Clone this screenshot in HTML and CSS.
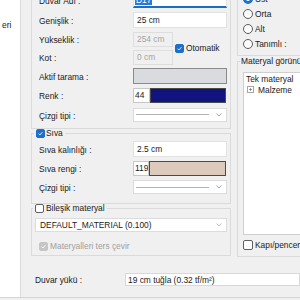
FILE: index.html
```html
<!DOCTYPE html>
<html lang="tr">
<head>
<meta charset="utf-8">
<link rel="stylesheet" href="styles.css">
</head>
<body>
<div class="frame">
  <aside class="sidebar"><span class="side-item">eri</span></aside>
  <main class="dialog">
    <div class="columns">
      <div class="col-left">
        <fieldset class="group g-main">
          <div class="form form-main">
            <span class="lbl">Duvar Adı :</span>
            <div class="field focus span2 h16"><span class="sel">D17</span></div>

            <span class="lbl">Genişlik :</span>
            <div class="field span2 h16">25 cm</div>

            <span class="lbl">Yükseklik :</span>
            <div class="field disabled h15 narrow">254 cm</div>
            <div class="auto-check">
              <span class="cb checked"><svg viewBox="0 0 10 10"><path d="M2.3 5.2 L4.2 7.1 L7.8 3.1" fill="none" stroke="#fff" stroke-width="1.2"/></svg></span>
              <span>Otomatik</span>
            </div>

            <span class="lbl">Kot :</span>
            <div class="field disabled h15 narrow">0 cm</div>

            <span class="lbl">Aktif tarama :</span>
            <div class="swatch-gray span2"></div>

            <span class="lbl">Renk :</span>
            <div class="color span2"><span class="num">44</span><span class="sw sw-navy"></span></div>

            <span class="lbl">Çizgi tipi :</span>
            <div class="combo span2 h14"><span class="line"></span><svg class="chev" viewBox="0 0 6 4"><path d="M0.5 0.5 L3 3 L5.5 0.5" fill="none" stroke="#8a8a8a" stroke-width="0.8"/></svg></div>
          </div>
        </fieldset>

        <fieldset class="group g-siva">
          <legend class="legend-cb lg-siva">
            <span class="cb checked"><svg viewBox="0 0 10 10"><path d="M2.3 5.2 L4.2 7.1 L7.8 3.1" fill="none" stroke="#fff" stroke-width="1.2"/></svg></span>
            <span>Sıva</span>
          </legend>
          <div class="form form-siva">
            <span class="lbl">Sıva kalınlığı :</span>
            <div class="field span2 h16">2.5 cm</div>

            <span class="lbl">Sıva rengi :</span>
            <div class="color span2"><span class="num num-clip">119</span><span class="sw sw-beige"></span></div>

            <span class="lbl">Çizgi tipi :</span>
            <div class="combo span2 h14"><span class="line"></span><svg class="chev" viewBox="0 0 6 4"><path d="M0.5 0.5 L3 3 L5.5 0.5" fill="none" stroke="#8a8a8a" stroke-width="0.8"/></svg></div>
          </div>
        </fieldset>

        <fieldset class="group g-bilesik">
          <legend class="legend-cb lg-bilesik">
            <span class="cb"></span>
            <span>Bileşik materyal</span>
          </legend>
          <div class="combo combo-text h14"><span class="ctext">DEFAULT_MATERIAL (0.100)</span><svg class="chev" viewBox="0 0 6 4"><path d="M0.5 0.5 L3 3 L5.5 0.5" fill="none" stroke="#b0b0b0" stroke-width="0.8"/></svg></div>
          <div class="check-row disabled-row">
            <span class="cb cb-disabled"><svg viewBox="0 0 10 10"><path d="M2.3 5.2 L4.2 7.1 L7.8 3.1" fill="none" stroke="#fff" stroke-width="1.2"/></svg></span>
            <span>Materyalleri ters çevir</span>
          </div>
        </fieldset>
      </div>

      <div class="col-right">
        <fieldset class="group g-radio">
          <div class="radio-row"><span class="rb checked"></span><span>Üst</span></div>
          <div class="radio-row"><span class="rb"></span><span>Orta</span></div>
          <div class="radio-row"><span class="rb"></span><span>Alt</span></div>
          <div class="radio-row"><span class="rb"></span><span>Tanımlı :</span></div>
        </fieldset>

        <fieldset class="group g-mat">
          <legend class="lg-mat">Materyal görünüşü</legend>
          <div class="listbox">
            <div class="li li-head">Tek materyal</div>
            <div class="li li-node"><span class="expander"><svg viewBox="0 0 7 7"><path d="M1.5 3.5 H5.5 M3.5 1.5 V5.5" stroke="#555" stroke-width="0.8"/></svg></span><span>Malzeme</span></div>
          </div>
          <div class="check-row kapi-row">
            <span class="cb"></span>
            <span>Kapı/pencere</span>
          </div>
        </fieldset>
      </div>
    </div>

    <div class="load-row">
      <span class="load-lbl">Duvar yükü :</span>
      <div class="load-field">19 cm tuğla (0.32 tf/m²)</div>
    </div>
  </main>
</div>
</body>
</html>
```

FILE: styles.css
```css
* { box-sizing: border-box; }

html, body { margin: 0; padding: 0; }

body {
  width: 300px;
  height: 300px;
  overflow: hidden;
  background: #f0f0f0;
  font-family: "Liberation Sans", Arial, sans-serif;
  font-size: 8.4px;
  line-height: 10px;
  color: #1a1a1a;
}

.frame {
  display: flex;
  height: 298px;
  border-bottom: 1px solid #d4d4d4;
  overflow: hidden;
}

.sidebar {
  width: 21px;
  flex: none;
  background: #fff;
  border-right: 1px solid #dcdcdc;
  padding: 20px 0 0 2px;
  white-space: nowrap;
  overflow: hidden;
}

.dialog {
  flex: 1;
  min-width: 0;
  display: flex;
  flex-direction: column;
  margin-top: -20px;
}

.columns {
  display: flex;
  gap: 6px;
  padding-left: 10px;
  align-items: flex-start;
}

.col-left {
  width: 200px;
  flex: none;
  display: flex;
  flex-direction: column;
}

.col-right {
  width: 90px;
  flex: none;
  display: flex;
  flex-direction: column;
}

fieldset.group {
  margin: 0;
  border: 1px solid #dadada;
  min-width: 0;
}

/* main group */
.g-main { padding: 9px 3px 4px 7px; }

.form {
  display: grid;
  grid-template-columns: 94px 42px 52px;
  align-items: center;
}

.form-main { grid-template-rows: 20px 20px 18px 18px 19px 20px 19px; }
.form-siva { grid-template-rows: 19px 19px 19px; }

.lbl { white-space: nowrap; padding-top: 2px; }

.span2 { grid-column: 2 / span 2; }

.h16 { height: 16px; }
.h15 { height: 15px; }
.h14 { height: 14px; }

.field {
  background: #fff;
  border: 1px solid #e2e2e2;
  padding: 0 3px;
  display: flex;
  align-items: center;
  white-space: nowrap;
  overflow: hidden;
}

.field.focus { border-bottom: 2px solid #1a6fc4; padding-left: 1px; }

.sel {
  background: #2b78d4;
  color: #fff;
  padding: 0 1px;
}

.field.disabled {
  background: #f0f0f0;
  border-color: #dedede;
  color: #a3a3a3;
}

.narrow { width: 40px; }

.auto-check {
  grid-column: 3;
  grid-row: 3 / span 2;
  display: flex;
  align-items: center;
  gap: 2px;
}

.swatch-gray {
  height: 16px;
  border: 1px solid #8a8a8a;
  background: #d9dbde;
}

.color {
  display: flex;
  height: 15px;
}

.color .num {
  width: 17px;
  flex: none;
  background: #fff;
  border: 1px solid #c8c8c8;
  padding-left: 1px;
  overflow: hidden;
  white-space: nowrap;
  line-height: 13px;
}

.color .num-clip { width: 16px; padding-left: 1px; }

.color .sw {
  flex: 1;
  margin-right: 1px;
  border: 1px solid #4a4a4a;
}

.sw-navy { background: #11137f; }
.sw-beige { background: #dccbbd; }

.combo {
  background: #fff;
  border: 1px solid #dcdcdc;
  display: flex;
  align-items: center;
  padding: 0 4px 0 2px;
}

.combo .line {
  flex: 1;
  height: 1px;
  background: #b4b4b4;
  margin-right: 7px;
}

.chev { width: 6px; height: 4px; flex: none; }

/* checkboxes */
.cb {
  width: 9px;
  height: 9px;
  flex: none;
  border: 1px solid #5f5f5f;
  border-radius: 2px;
  background: #fff;
  display: inline-flex;
}

.cb svg { width: 100%; height: 100%; }

.cb.checked {
  background: #1d6fc9;
  border-color: #1d6fc9;
}

.cb-disabled {
  background: #c6c6c6;
  border-color: #c6c6c6;
}

/* legends */
.legend-cb {
  display: flex;
  align-items: center;
  gap: 2px;
  line-height: 9px;
  padding: 0 2px;
}

.g-siva { padding: 1.5px 3px 6.5px 7px; }
.lg-siva { margin-left: -5px; gap: 1px; }

.g-bilesik { margin-top: 3.5px; padding: 4.5px 3px 4.5px 3px; }
.lg-bilesik { margin-left: -2px; }

.combo-text { padding-left: 4px; }
.combo-text .ctext { flex: 1; white-space: nowrap; }

.check-row {
  display: flex;
  align-items: center;
  gap: 2px;
  height: 9px;
}

.disabled-row {
  margin-top: 10px;
  margin-left: 4px;
  color: #a0a0a0;
}

/* right column */
.g-radio { padding: 10.5px 0 3.5px 5px; }

.radio-row {
  height: 15px;
  display: flex;
  align-items: center;
  gap: 2px;
  white-space: nowrap;
}

.rb {
  width: 10px;
  height: 10px;
  flex: none;
  border: 1px solid #5c5c5c;
  border-radius: 50%;
  background: #fbfbfb;
}

.rb.checked {
  border: 3px solid #1d6fc9;
  background: #fff;
}

.g-mat { margin-top: 4px; padding: 5px 0 5.5px 5px; }

.lg-mat {
  margin-left: -3px;
  padding: 0 1px;
  line-height: 11px;
  white-space: nowrap;
}

.listbox {
  height: 163px;
  background: #fff;
  border: 1px solid #cfcfcf;
  border-right: none;
}

.li {
  height: 11px;
  display: flex;
  align-items: center;
  white-space: nowrap;
}

.li-head { padding-left: 2px; }

.li-node { padding-left: 3px; gap: 4px; }

.expander {
  width: 7px;
  height: 7px;
  border: 1px solid #a5a5a5;
  display: inline-flex;
  background: #fff;
}

.expander svg { width: 100%; height: 100%; }

.kapi-row {
  margin-top: 5px;
  height: 10px;
  white-space: nowrap;
}

.kapi-row .cb { width: 10px; height: 10px; }

/* bottom row */
.load-row {
  display: flex;
  align-items: center;
  margin-top: 16.5px;
  padding-left: 14px;
}

.load-lbl {
  width: 90px;
  flex: none;
  padding-top: 1px;
}

.load-field {
  flex: 1;
  height: 13px;
  background: #fff;
  border: 1px solid #d8d8d8;
  padding-left: 2px;
  white-space: nowrap;
  display: flex;
  align-items: center;
}
```
